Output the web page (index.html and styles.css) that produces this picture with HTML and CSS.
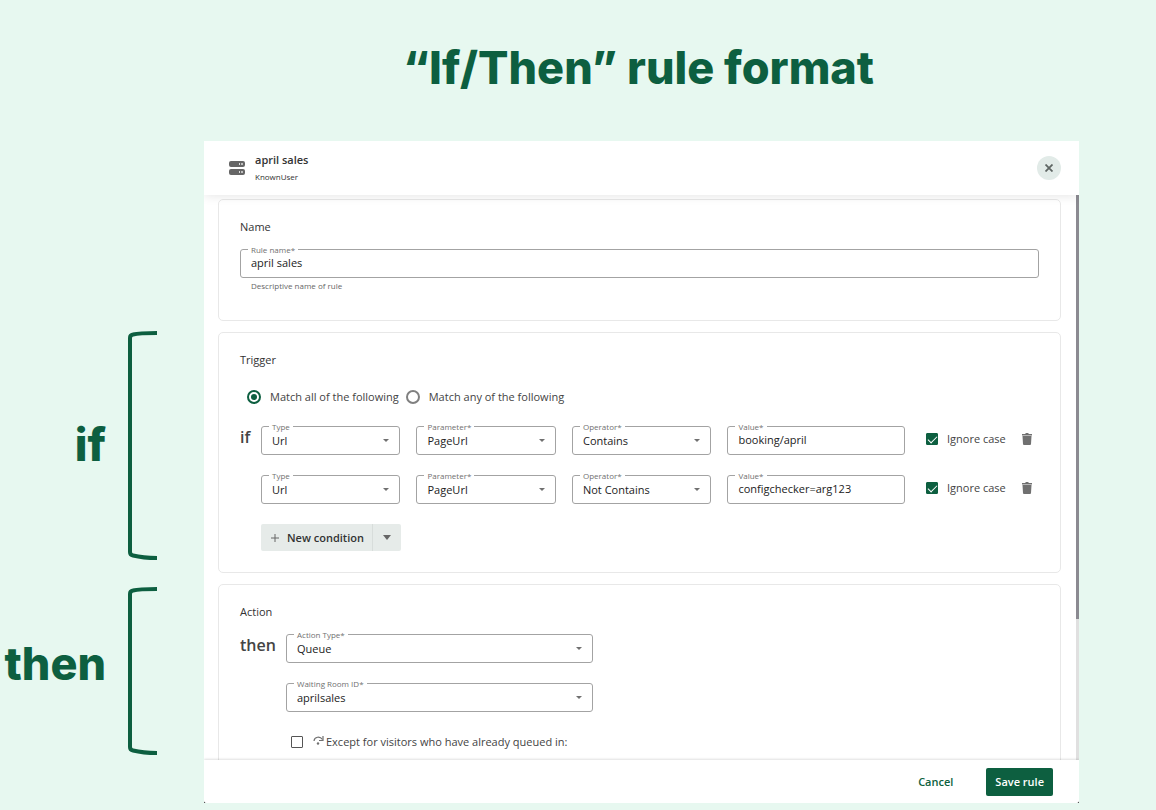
FILE: index.html
```html
<!DOCTYPE html>
<html lang="en">
<head>
	<meta charset="UTF-8">
	<meta name="viewport" content="width=device-width, initial-scale=1">
	<title>If/Then rule format</title>
	<link rel="stylesheet" href="styles.css">
</head>
<body>
	<div class="page">
		<h1 class="title">“If/Then” rule format</h1>

		<aside class="notes">
			<div class="note">
				<span>if</span>
				<svg width="29" height="230" viewBox="0 0 29 230"><path d="M29 3C18 3 9 3.500 5 4.500Q2 5 2 8V222Q2 225 5 225.500C9 226.500 18 228 29 228" fill="none" stroke="#0d5f40" stroke-width="4"/></svg>
			</div>
			<div class="note note-then">
				<span>then</span>
				<svg width="29" height="170" viewBox="0 0 29 170"><path d="M29 3C18 3 9 3.500 5 4.500Q2 5 2 8V161Q2 164 5 164.500C9 165.500 18 167 29 167" fill="none" stroke="#0d5f40" stroke-width="4"/></svg>
			</div>
		</aside>

		<div class="frame">
			<form class="dialog">
				<header class="dialog-head">
					<svg class="server" width="16" height="14" viewBox="0 0 16 14">
						<rect width="16" height="6" rx="2" fill="#666"/>
						<rect y="8" width="16" height="6" rx="2" fill="#666"/>
						<g fill="#ddd"><rect x="10" y="2" width="1" height="2"/><rect x="12" y="2" width="2" height="2" rx="1"/><rect x="10" y="10" width="1" height="2"/><rect x="12" y="10" width="2" height="2" rx="1"/></g>
					</svg>
					<div class="head-text">
						<h2>april sales</h2>
						<p>KnownUser</p>
					</div>
					<button type="button" class="close" aria-label="Close">
						<svg width="8" height="8" viewBox="0 0 8 8"><path d="M0.500 0.500L7.500 7.500M7.500 0.500L0.500 7.500" stroke="#5f6664" stroke-width="1.800"/></svg>
					</button>
				</header>

				<div class="dialog-body">
					<div class="cards">
						<!-- name -->
						<section class="card">
							<h3>Name</h3>
							<div class="field">
								<label for="ruleName">Rule name*</label>
								<input type="text" id="ruleName" value="april sales">
							</div>
							<p class="hint">Descriptive name of rule</p>
						</section>

						<!-- trigger -->
						<section class="card">
							<h3>Trigger</h3>
							<div class="radios">
								<label><input type="radio" name="match" checked>Match all of the following</label>
								<label><input type="radio" name="match">Match any of the following</label>
							</div>
							<div class="rule">
								<strong class="if">if</strong>
								<div class="rows">
									<div class="condition">
										<div class="field select">
											<label for="type1">Type</label>
											<select id="type1"><option>Url</option></select>
										</div>
										<div class="field select">
											<label for="param1">Parameter*</label>
											<select id="param1"><option>PageUrl</option></select>
										</div>
										<div class="field select">
											<label for="op1">Operator*</label>
											<select id="op1"><option>Contains</option></select>
										</div>
										<div class="field">
											<label for="value1">Value*</label>
											<input type="text" id="value1" value="booking/april">
										</div>
										<div class="extra">
											<label class="check"><input type="checkbox" checked>Ignore case</label>
											<button type="button" class="trash" aria-label="Delete condition">
												<svg width="10" height="12" viewBox="0 0 10 12"><path d="M0 1H3L4 0H6L7 1H10V2.500H0ZM0.500 3H9.500L9 11Q9 12 8 12H2Q1 12 1 11Z" fill="#707070"/></svg>
											</button>
										</div>
									</div>
									<div class="condition">
										<div class="field select">
											<label for="type2">Type</label>
											<select id="type2"><option>Url</option></select>
										</div>
										<div class="field select">
											<label for="param2">Parameter*</label>
											<select id="param2"><option>PageUrl</option></select>
										</div>
										<div class="field select">
											<label for="op2">Operator*</label>
											<select id="op2"><option>Not Contains</option></select>
										</div>
										<div class="field">
											<label for="value2">Value*</label>
											<input type="text" id="value2" value="configchecker=arg123">
										</div>
										<div class="extra">
											<label class="check"><input type="checkbox" checked>Ignore case</label>
											<button type="button" class="trash" aria-label="Delete condition">
												<svg width="10" height="12" viewBox="0 0 10 12"><path d="M0 1H3L4 0H6L7 1H10V2.500H0ZM0.500 3H9.500L9 11Q9 12 8 12H2Q1 12 1 11Z" fill="#707070"/></svg>
											</button>
										</div>
									</div>
									<div class="split">
										<button type="button" class="new">
											<svg width="8" height="8" viewBox="0 0 8 8"><path d="M4 0V8M0 4H8" stroke="#666" stroke-width="1"/></svg>
											New condition
										</button>
										<button type="button" class="more" aria-label="More conditions">
											<svg width="8" height="5" viewBox="0 0 8 5"><path d="M0 0H8L4 5Z" fill="#666"/></svg>
										</button>
									</div>
								</div>
							</div>
						</section>

						<!-- action -->
						<section class="card">
							<h3>Action</h3>
							<div class="rule">
								<strong class="then">then</strong>
								<div class="rows narrow">
									<div class="field select">
										<label for="actionType">Action Type*</label>
										<select id="actionType"><option>Queue</option></select>
									</div>
									<div class="field select">
										<label for="room">Waiting Room ID*</label>
										<select id="room"><option>aprilsales</option></select>
									</div>
									<label class="check except">
										<input type="checkbox">
										<svg width="11" height="12" viewBox="0 0 11 12"><path d="M1 5C1.500 0.500 7 0 9.500 3.500" fill="none" stroke="#707070" stroke-width="1.200"/><path d="M10 0V4.500H6" fill="none" stroke="#707070" stroke-width="1.200"/><circle cx="5" cy="7.500" r="1.200" fill="#707070"/></svg>
										Except for visitors who have already queued in:
									</label>
								</div>
							</div>
						</section>
					</div>
					<div class="track"><div class="thumb"></div></div>
				</div>

				<footer class="dialog-foot">
					<button type="button" class="cancel">Cancel</button>
					<button type="submit" class="save">Save rule</button>
				</footer>
			</form>
		</div>
	</div>
</body>
</html>
```
FILE: styles.css
```css
*{margin:0;padding:0;box-sizing:border-box;}
body{
	background-color: #e7f8f0;
	font-family: "Open Sans", "Noto Sans", sans-serif;
	font-size: 11px;
	color: #444;
}
button,input,select{
	font: inherit;
	color: inherit;
	border: 0;
	background: none;
}
button{cursor:pointer;}
svg{display:block;flex:none;}
.page{
	height: 100vh;
	display: grid;
	grid-template-columns: 157px 1fr;
	grid-template-rows: 141px 1fr;
	column-gap: 47px;
	padding: 0 77px 7px 0;
}
.title{
	grid-column: 2;
	padding: 38px 6px 0 0;
	text-align: center;
	font: 800 45px/60px Inter, sans-serif;
	color: #0d5f40;
}

/* if / then notes */
.notes{
	padding-top: 189px;
}
.note{
	display: flex;
	align-items: center;
	justify-content: flex-end;
	gap: 22px;
	margin-bottom: 26px;
	font: 800 45px/60px Inter, sans-serif;
	color: #0d5f40;
}
.note-then span{
	padding-bottom: 14px;
}

/* dialog */
.frame{
	min-height: 0;
	background-color: #333;
}
.dialog{
	height: 100%;
	display: flex;
	flex-direction: column;
	background-color: #fff;
	border-radius: 0 0 3px 3px;
	overflow: hidden;
}
.dialog-head{
	position: relative;
	display: flex;
	align-items: center;
	height: 54px;
	padding: 0 18px 0 25px;
	box-shadow: 0 1px 10px rgba(0,0,0,0.1);
}
.head-text{
	flex: 1;
	margin-left: 10px;
}
.head-text h2{
	font-size: 11px;
	line-height: 18px;
	font-weight: 600;
	color: #333;
}
.head-text p{
	font-size: 8px;
	line-height: 16px;
	color: #333;
}
.close{
	display: flex;
	align-items: center;
	justify-content: center;
	width: 24px;
	height: 24px;
	border-radius: 50%;
	background-color: #e2ebe8;
}
.dialog-body{
	flex: 1;
	min-height: 0;
	display: flex;
	overflow: hidden;
}
.cards{
	flex: 1;
	display: flex;
	flex-direction: column;
	gap: 11px;
	padding: 4px 15px 0 14px;
}
.track{
	width: 3px;
	background-color: #e0e0e0;
}
.thumb{
	height: 75%;
	background-color: #8b8a91;
}
.card{
	flex: none;
	padding: 19px 21px 21px;
	border: 1px solid #e8e8e8;
	border-radius: 5px;
}
.card h3{
	margin-bottom: 14px;
	font-size: 11px;
	line-height: 16px;
	font-weight: 400;
	color: #333;
}

/* outlined fields */
.field{
	position: relative;
	min-width: 0;
}
.field label{
	position: absolute;
	top: -5px;
	left: 8px;
	padding: 0 3px;
	font-size: 8px;
	line-height: 12px;
	color: #707070;
	background-color: #fff;
}
.field input,.field select{
	display: block;
	width: 100%;
	height: 29px;
	padding: 0 10px;
	border: 1px solid #a3a3a3;
	border-radius: 3px;
	line-height: 16px;
	color: #222;
	appearance: none;
	background-color: #fff;
}
.field input{
	padding-bottom: 3px;
}
.select::after{
	content: '';
	position: absolute;
	top: 13px;
	right: 11px;
	border: 3px solid transparent;
	border-top-color: #707070;
	border-bottom: 0;
}
.hint{
	padding: 0 11px 5px;
	font-size: 8px;
	line-height: 16px;
	color: #666;
}
.radios{
	display: flex;
	gap: 7px;
	padding: 7px 7px 21px;
}
.radios label,.check{
	display: flex;
	align-items: center;
	line-height: 16px;
}
.radios input{
	width: 14px;
	height: 14px;
	margin-right: 9px;
	border: 2px solid #808080;
	border-radius: 50%;
	appearance: none;
}
.radios input:checked{
	padding: 2px;
	border-color: #0d5f40;
	background: #0d5f40 content-box;
}
.rule{
	display: flex;
}
.rule strong{
	flex: none;
	font-size: 16px;
	line-height: 22px;
	font-weight: 600;
}
.if{width: 21px;}
.then{width: 46px;}
.rows{
	flex: 1;
	display: flex;
	flex-direction: column;
	gap: 20px;
	min-width: 0;
}
.narrow{max-width: 307px;}
.condition{
	display: grid;
	grid-template-columns: 11fr 11fr 11fr 14fr 118px;
	gap: 16px;
}
.extra{
	display: flex;
	align-items: center;
	justify-content: space-between;
	padding: 0 7px 4px 5px;
}
.check input{
	flex: none;
	display: flex;
	justify-content: center;
	width: 12px;
	height: 12px;
	margin-right: 9px;
	border: 1px solid #555;
	border-radius: 1px;
	appearance: none;
}
.check input:checked{
	border-color: #0d5f40;
	background-color: #0d5f40;
}
.check input:checked::after{
	content: '';
	width: 4px;
	height: 8px;
	border: solid #fff;
	border-width: 0 1px 1px 0;
	transform: rotate(45deg);
}
.except{
	padding: 2px 0 20px 5px;
	white-space: nowrap;
}
.except svg{
	margin: 0 2px 0 1px;
}
.split{
	display: flex;
	align-self: flex-start;
	color: #333;
}
.split button{
	display: flex;
	align-items: center;
	height: 27px;
	background-color: #e6ebe9;
	font-weight: 600;
}
.split .new{
	gap: 8px;
	padding: 0 8px 0 10px;
	border-radius: 2px 0 0 2px;
}
.split .more{
	padding: 0 10px;
	border-left: 1px solid #d8dddb;
	border-radius: 0 2px 2px 0;
}

.dialog-foot{
	position: relative;
	display: flex;
	align-items: center;
	justify-content: flex-end;
	height: 43px;
	padding: 0 26px;
	background-color: #fff;
	box-shadow: 0 -1px 2px rgba(0,0,0,0.12);
	font-weight: 600;
}
.cancel{
	padding: 0 33px;
	color: #0d5f40;
}
.save{
	height: 28px;
	padding: 0 9px;
	border-radius: 2px;
	color: #fff;
	background-color: #0d5f40;
}
```
